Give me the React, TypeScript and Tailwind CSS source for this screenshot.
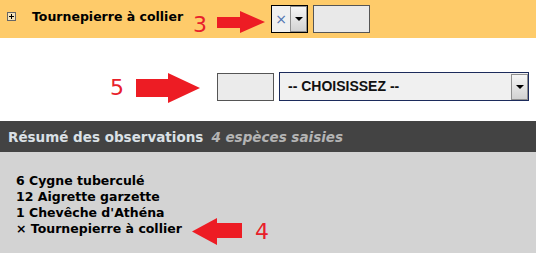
import React from "react";

const RED = "#ed1c24";

// Annotation arrows from the screenshot: blocky red shapes.
function ArrowRight({ w, h, shaftTop, shaftBottom, headX }: { w: number; h: number; shaftTop: number; shaftBottom: number; headX: number }) {
  const pts = `0,${shaftTop} ${headX},${shaftTop} ${headX},0 ${w},${h / 2} ${headX},${h} ${headX},${shaftBottom} 0,${shaftBottom}`;
  return (
    <svg width={w} height={h} viewBox={`0 0 ${w} ${h}`} className="block shrink-0">
      <polygon points={pts} fill={RED} />
    </svg>
  );
}

function ArrowLeft({ w, h, shaftTop, shaftBottom, headX }: { w: number; h: number; shaftTop: number; shaftBottom: number; headX: number }) {
  const pts = `0,${h / 2} ${headX},0 ${headX},${shaftTop} ${w},${shaftTop} ${w},${shaftBottom} ${headX},${shaftBottom} ${headX},${h}`;
  return (
    <svg width={w} height={h} viewBox={`0 0 ${w} ${h}`} className="block shrink-0">
      <polygon points={pts} fill={RED} />
    </svg>
  );
}

function DropButton({ className = "" }: { className?: string }) {
  return (
    <div
      className={`flex shrink-0 items-center justify-center border border-[#8f8f8f] bg-gradient-to-b from-[#f6f6f6] to-[#d2d2d2] ${className}`}
    >
      <div className="h-0 w-0 border-x-[4px] border-t-[4px] border-x-transparent border-t-black" />
    </div>
  );
}

function Num({ n, className = "" }: { n: string; className?: string }) {
  return (
    <div className={`shrink-0 font-['DejaVu_Sans',sans-serif] text-[22px] leading-[22px] text-[#e8202a] ${className}`}>
      {n}
    </div>
  );
}

const SPECIES = ["6 Cygne tuberculé", "12 Aigrette garzette", "1 Chevêche d'Athéna"];

export default function App() {
  return (
    <div className="h-[253px] w-[536px] overflow-hidden bg-white font-['DejaVu_Sans',sans-serif]">
      {/* species row being edited */}
      <div className="flex h-[38px] items-start bg-[#fecb6a] pl-[7px]">
        <svg width="9" height="9" viewBox="0 0 9 9" className="mt-[12px] block shrink-0">
          <rect x="0.5" y="0.5" width="8" height="8" fill="#f3e2b8" stroke="#666" />
          <path d="M2 4.5h5M4.5 2v5" stroke="#000" />
        </svg>
        <div className="ml-[16px] mt-[10px] w-[161px] shrink-0 whitespace-nowrap text-[12.5px] leading-[14px] font-bold text-black">
          Tournepierre à collier
        </div>
        <Num n="3" className="mt-[14px] w-[24px]" />
        <div className="mt-[11px]">
          <ArrowRight w={48} h={22} shaftTop={6} shaftBottom={17} headX={23} />
        </div>
        <div className="ml-[6px] mt-[5px] flex h-[28px] w-[37px] shrink-0 border border-black bg-[#f0f0f0]">
          <div className="flex flex-1 items-center justify-center text-[14px] leading-none text-[#4f74b3]">×</div>
          <DropButton className="h-full w-[17px]" />
        </div>
        <div className="ml-[5px] mt-[5px] h-[28px] w-[57px] shrink-0 border border-[#555] bg-[#e9e9e9]" />
      </div>

      {/* count + species picker */}
      <div className="flex h-[83px] items-start pl-[110px]">
        <Num n="5" className="mt-[39px] w-[26px]" />
        <div className="mt-[35px]">
          <ArrowRight w={64} h={30} shaftTop={6} shaftBottom={24} headX={32} />
        </div>
        <div className="ml-[17px] mt-[35px] h-[28px] w-[57px] shrink-0 border border-[#555] bg-[#ebebeb]" />
        <div className="ml-[5px] mt-[34px] flex h-[29px] w-[250px] shrink-0 items-center border border-[#1c2b5c] bg-[#f0f0f0]">
          <div className="flex-1 pl-[8px] font-['Liberation_Sans',Arial,sans-serif] text-[14px] font-bold text-[#111]">
            -- CHOISISSEZ --
          </div>
          <DropButton className="h-[26px] w-[17px]" />
        </div>
      </div>

      {/* summary */}
      <div className="flex h-[31px] items-center bg-[#434343] pl-[8px] pt-[2px] text-[13.5px] font-bold">
        <span className="text-[#dae0e5]">Résumé des observations</span>
        <span className="ml-[8px] italic text-[#b4b4b4]">4 espèces saisies</span>
      </div>
      <div className="h-[101px] bg-[#d3d3d3] pl-[16px] pt-[21px] text-[12.5px] leading-[16px] font-bold text-black">
        {SPECIES.map((s) => (
          <div key={s} className="whitespace-nowrap">
            {s}
          </div>
        ))}
        <div className="flex items-start">
          <div className="w-[176px] shrink-0 whitespace-nowrap">× Tournepierre à collier</div>
          <div className="-mt-[3px]">
            <ArrowLeft w={50} h={27} shaftTop={5} shaftBottom={20} headX={25} />
          </div>
          <Num n="4" className="ml-[13px] font-normal" />
        </div>
      </div>
    </div>
  );
}
